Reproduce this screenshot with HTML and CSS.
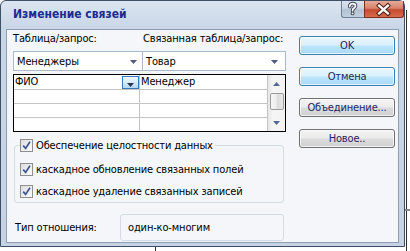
FILE: index.html
```html
<!DOCTYPE html>
<html>
<head>
<meta charset="utf-8">
<link rel="stylesheet" href="styles.css">
</head>
<body>
<div class="desk-v"></div>
<div class="desk-h"></div>
<div class="desk-b"></div>
<div class="window">
  <div class="titlebar">
    <span class="title">Изменение связей</span>
    <div class="caption">
      <div class="cbtn help">
        <svg width="23" height="17" viewBox="0 0 23 17">
          <path d="M8.7 5.6 C8.7 3.6 10 2.6 11.6 2.6 C13.4 2.6 14.5 3.6 14.5 5 C14.5 6.6 13 7 12 7.9 L11.6 9.6" fill="none" stroke="#3c4658" stroke-width="3.6" stroke-linecap="round"/>
          <circle cx="11.6" cy="12.4" r="1.9" fill="#3c4658"/>
          <path d="M8.7 5.6 C8.7 3.6 10 2.6 11.6 2.6 C13.4 2.6 14.5 3.6 14.5 5 C14.5 6.6 13 7 12 7.9 L11.6 9.6" fill="none" stroke="#fff" stroke-width="1.7" stroke-linecap="round"/>
          <circle cx="11.6" cy="12.4" r="0.95" fill="#fff"/>
        </svg>
      </div>
      <div class="cbtn close">
        <svg width="40" height="17" viewBox="0 0 40 17">
          <path d="M15.5 4.5 L24.5 12.5 M24.5 4.5 L15.5 12.5" stroke="#4a2018" stroke-width="4.4" stroke-linecap="square"/>
          <path d="M15.5 4.5 L24.5 12.5 M24.5 4.5 L15.5 12.5" stroke="#fff" stroke-width="2.4" stroke-linecap="square"/>
        </svg>
      </div>
    </div>
  </div>
  <div class="client">
    <div class="left">
      <div class="labels">
        <span class="lab1">Таблица/запрос:</span>
        <span class="lab2">Связанная таблица/запрос:</span>
      </div>
      <div class="combos">
        <div class="combo c1"><span>Менеджеры</span><svg class="arr" width="7" height="4" viewBox="0 0 7 4"><path d="M0 0 H7 L3.5 4 Z" fill="#4f5d7c"/></svg></div>
        <div class="combo c2"><span>Товар</span><svg class="arr" width="7" height="4" viewBox="0 0 7 4"><path d="M0 0 H7 L3.5 4 Z" fill="#4f5d7c"/></svg></div>
      </div>
      <div class="grid">
        <div class="col col1">
          <div class="cell">ФИО<span class="dd"><svg width="7" height="4" viewBox="0 0 7 4"><path d="M0 0 H7 L3.5 4 Z" fill="#2b3550"/></svg></span></div>
          <div class="cell"></div>
          <div class="cell"></div>
          <div class="cell"></div>
        </div>
        <div class="col col2">
          <div class="cell">Менеджер</div>
          <div class="cell"></div>
          <div class="cell"></div>
          <div class="cell"></div>
        </div>
        <div class="sbar">
          <div class="sb-btn"><svg width="7" height="4" viewBox="0 0 7 4"><path d="M0 4 H7 L3.5 0 Z" fill="#4f6a96"/></svg></div>
          <div class="sb-track"><div class="thumb"></div></div>
          <div class="sb-btn"><svg width="7" height="4" viewBox="0 0 7 4"><path d="M0 0 H7 L3.5 4 Z" fill="#4f6a96"/></svg></div>
        </div>
      </div>
      <fieldset class="group">
        <legend><span class="chk"><span class="box"><svg width="11" height="11" viewBox="0 0 11 11"><path d="M2.2 5.6 L4.6 8.4 L9 1.8" fill="none" stroke="#3e5595" stroke-width="1.7"/></svg></span>Обеспечение целостности данных</span></legend>
        <span class="chk row2"><span class="box"><svg width="11" height="11" viewBox="0 0 11 11"><path d="M2.2 5.6 L4.6 8.4 L9 1.8" fill="none" stroke="#3e5595" stroke-width="1.7"/></svg></span>каскадное обновление связанных полей</span>
        <span class="chk row3"><span class="box"><svg width="11" height="11" viewBox="0 0 11 11"><path d="M2.2 5.6 L4.6 8.4 L9 1.8" fill="none" stroke="#3e5595" stroke-width="1.7"/></svg></span>каскадное удаление связанных записей</span>
      </fieldset>
      <div class="type-row">
        <span class="type-label">Тип отношения:</span>
        <div class="type-box">один-ко-многим</div>
      </div>
    </div>
    <div class="right">
      <div class="btn hot">OK</div>
      <div class="btn hot">Отмена</div>
      <div class="btn">Объединение...</div>
      <div class="btn">Новое..</div>
    </div>
  </div>
</div>
</body>
</html>
```

FILE: styles.css
```css
* { box-sizing: border-box; }
html, body { margin: 0; padding: 0; }
body {
  width: 410px;
  height: 251px;
  position: relative;
  overflow: hidden;
  background: #ffffff;
  font-family: "DejaVu Sans Condensed", "DejaVu Sans", sans-serif;
  font-stretch: condensed;
  font-size: 11px;
  letter-spacing: -0.15px;
  color: #000;
  white-space: nowrap;
}
.desk-v { position: absolute; left: 406px; top: 10px; width: 1px; height: 241px; background: #2e2e2e; }
.desk-h { position: absolute; left: 405px; top: 209px; width: 5px; height: 2px; background: #8a8a8a; }
.desk-b { position: absolute; left: 155px; top: 246px; width: 1px; height: 5px; background: #2e2e2e; }

.window {
  position: absolute;
  left: 0;
  top: 0;
  width: 405px;
  height: 247px;
  border: 1px solid #3f4f66;
  border-radius: 6px 6px 0 0;
  background: linear-gradient(to bottom, #dbe5f1 0, #c9d6e7 28px, #c6d3e4 100%);
  display: flex;
  flex-direction: column;
}
.titlebar {
  height: 28px;
  display: flex;
  align-items: flex-start;
  flex: none;
}
.title {
  margin: 5px 0 0 12px;
  font-weight: bold;
  font-size: 12px;
  line-height: 16px;
  letter-spacing: 0;
  color: #1b2a92;
}
.caption { margin-left: auto; display: flex; }
.cbtn { height: 17px; display: flex; }
.help {
  width: 23px;
  border: 1px solid #6f8199;
  border-top: none;
  border-right: none;
  border-radius: 0 0 0 3px;
  background: linear-gradient(to bottom, #dbe4ee 0, #c9d5e2 45%, #b3c2d3 55%, #c2cfdd 100%);
}
.close {
  width: 40px;
  border: 1px solid #7d2f20;
  border-top: none;
  border-radius: 0 0 3px 0;
  background: linear-gradient(to bottom, #e7ab98 0, #d8826a 45%, #c54a30 55%, #d66b4c 100%);
}
.help svg { margin-left: -1px; }
.close svg { margin-left: -1px; }

.client {
  flex: 1;
  margin: 0 5px 3px 5px;
  border: 1px solid #8d9db2;
  background: #f4f6fa;
  display: flex;
  padding: 2px 0 0 6px;
}
.left {
  width: 273px;
  display: flex;
  flex-direction: column;
}
.labels { display: flex; height: 13px; line-height: 13px; }
.lab1 { width: 129px; }
.lab2 { padding-left: 1px; }

.combos { display: flex; margin-top: 6px; }
.combo {
  height: 20px;
  border: 1px solid #a9bacd;
  background: #fff;
  display: flex;
  align-items: center;
  padding-left: 3px;
  line-height: 13px;
}
.combo span { flex: 1; }
.c1 { width: 130px; padding-right: 5px; }
.c2 { width: 144px; margin-left: -1px; padding-right: 7px; }
.arr { flex: none; margin-top: 2px; }

.grid {
  margin-top: 3px;
  height: 58px;
  border: 1px solid #000;
  background: #fff;
  display: flex;
}
.col { display: flex; flex-direction: column; }
.col1 { width: 126px; border-right: 1px solid #c4c4c4; }
.col2 { flex: 1; border-right: 1px solid #c4c4c4; }
.cell {
  height: 14px;
  line-height: 13px;
  padding-left: 1px;
  position: relative;
}
.cell + .cell { border-top: 1px solid #c4c4c4; }
.dd {
  position: absolute;
  right: 0;
  top: 1px;
  width: 17px;
  height: 13px;
  border: 1px solid #3a78b8;
  background: linear-gradient(to bottom, #eef6fd 0, #d6eafa 50%, #b5d6f1 100%);
  display: flex;
  align-items: flex-end;
  justify-content: center;
  padding-bottom: 1px;
}
.sbar {
  width: 17px;
  display: flex;
  flex-direction: column;
  background: linear-gradient(to right, #e6e6e6 0, #f6f6f6 30%, #f2f2f2 100%);
}
.sb-btn { height: 17px; display: flex; align-items: center; justify-content: center; }
.sb-track { flex: 1; padding-top: 1px; }
.thumb {
  margin: 0 1px 0 2px;
  height: 17px;
  border: 1px solid #9b9b9b;
  border-radius: 2px;
  background: linear-gradient(to right, #f7f7f7 0, #ececec 45%, #dcdcdc 55%, #e8e8e8 100%);
}

.group {
  margin: 7px 0 0 1px;
  width: 270px;
  padding: 0 0 4px 5px;
  border: 1px solid #d3dce4;
  border-radius: 3px;
  display: flex;
  flex-direction: column;
  align-items: flex-start;
}
.group legend { padding: 0 2px 0 0; margin: 0; }
.chk {
  display: flex;
  align-items: center;
  height: 13px;
  line-height: 13px;
}
.row2 { margin-top: 11px; }
.row3 { margin-top: 9px; }
.box {
  width: 13px;
  height: 13px;
  border: 1px solid #8e8f8f;
  background: linear-gradient(to bottom right, #dcdcdc 0, #f0f0f0 60%, #fbfbfb 100%);
  margin-right: 3px;
  display: flex;
  align-items: center;
  justify-content: center;
  flex: none;
}

.type-row {
  margin-top: 11px;
  display: flex;
  align-items: center;
}
.type-label { width: 107px; padding-left: 2px; }
.type-box {
  width: 164px;
  height: 27px;
  border: 1px solid #d3dce4;
  border-radius: 3px;
  display: flex;
  align-items: center;
  padding-left: 7px;
}

.right {
  margin-left: 13px;
  padding-top: 4px;
  display: flex;
  flex-direction: column;
  gap: 12px;
}
.btn {
  width: 96px;
  height: 19px;
  border: 1px solid #707070;
  border-radius: 3px;
  background: linear-gradient(to bottom, #f4f4f4 0, #ebebeb 48%, #dcdcdc 52%, #cfcfcf 100%);
  display: flex;
  align-items: center;
  justify-content: center;
  color: #1e2462;
  line-height: 13px;
  box-shadow: inset 0 0 0 1px rgba(255,255,255,0.7);
}
.btn.hot {
  border-color: #3c7fb1;
  background: linear-gradient(to bottom, #eaf6fd 0, #d9f0fc 48%, #bee6fd 52%, #a7d9f5 100%);
}
```
